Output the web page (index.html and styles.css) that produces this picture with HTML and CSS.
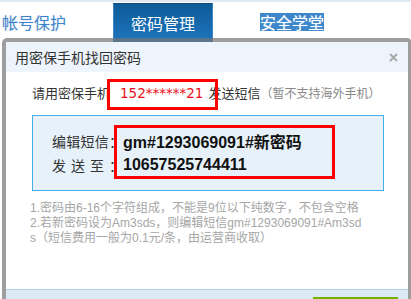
FILE: index.html
```html
<!DOCTYPE html>
<html lang="zh-CN">
<head>
<meta charset="utf-8">
<title>用密保手机找回密码</title>
<link rel="stylesheet" href="styles.css">
</head>
<body>
<div class="strip"></div>
<nav class="tabs">
  <div class="tab t1">帐号保护</div>
  <div class="tab t2">密码管理</div>
  <div class="tab t3"><span>安全学堂</span></div>
</nav>
<section class="dialog">
  <header class="dlg-title">
    <span>用密保手机找回密码</span>
    <svg class="close" width="9" height="9" viewBox="0 0 9 9"><path d="M1 1L8 8M8 1L1 8" stroke="#a8a8a8" stroke-width="1.8" fill="none"/></svg>
  </header>
  <div class="dlg-body">
    <p class="send-line">请用密保手机<span class="phone">152******21</span>发送短信<span class="hint">（暂不支持海外手机）</span></p>
    <i class="mark mark-phone"></i>
    <div class="sms-box">
      <div class="row"><span class="lbl">编辑短信：</span><b class="val">gm#1293069091#新密码</b></div>
      <div class="row"><span class="lbl">发送至：</span><b class="val">10657525744411</b></div>
      <i class="mark mark-sms"></i>
    </div>
    <div class="notes">1.密码由6-16个字符组成，不能是9位以下纯数字，不包含空格<br>2.若新密码设为Am3sds，则编辑短信gm#1293069091#Am3sd<br>s（短信费用一般为0.1元/条，由运营商收取）</div>
  </div>
  <footer class="dlg-foot"><span class="btn"></span></footer>
</section>
</body>
</html>
```
FILE: styles.css
```css
html, body {
  margin: 0;
  padding: 0;
}
body {
  width: 411px;
  height: 299px;
  overflow: hidden;
  background: #fff;
  font-family: "Liberation Sans", "Noto Sans CJK SC", sans-serif;
  color: #333;
}
.strip {
  height: 2px;
  background: #e0eaf5;
}
.tabs {
  display: flex;
  height: 40px;
  margin-top: 1px;
  font-size: 16px;
  font-family: "Noto Sans CJK SC", sans-serif;
}
.tab {
  display: flex;
  align-items: center;
  box-sizing: border-box;
  line-height: 1;
}
.t1 {
  width: 113px;
  padding-left: 2px;
  padding-bottom: 2px;
  color: #3d82c8;
  text-shadow: 0 0 1px #fff, 0 0 2px #cfe2f5;
}
.t2 {
  width: 100px;
  justify-content: center;
  color: #fff;
  background: linear-gradient(#0d5b97, #1f76c0);
  border-top: 1px solid #0a4b80;
  border-left: 1px solid #3a85c5;
  border-right: 1px solid #3a85c5;
  padding-bottom: 2px;
}
.t3 {
  padding-left: 47px;
  padding-bottom: 2px;
}
.t3 span {
  color: #fff;
  background: #3c87c9;
  padding: 1px 0;
  text-shadow: 0 0 1px #9cc6ec;
}
.dialog {
  position: relative;
  z-index: 1;
  margin: -5px 0 0 2px;
  width: 410px;
  box-sizing: border-box;
  border: 4px solid rgba(118, 118, 118, 0.7);
  border-bottom: none;
  border-radius: 5px 5px 0 0;
  background: #fff;
  background-clip: padding-box;
}
.dlg-title {
  height: 30px;
  display: flex;
  align-items: center;
  justify-content: space-between;
  padding: 0 10px 0 9px;
  background: #eef4fb;
  font-size: 14px;
  font-family: "Noto Sans CJK SC", sans-serif;
  color: #333;
}
.close {
  display: block;
}
.dlg-body {
  position: relative;
  height: 217px;
  box-sizing: border-box;
  padding-top: 11px;
}
.send-line {
  margin: 0 0 11px;
  padding-left: 26px;
  font-size: 13px;
  line-height: 20px;
  color: #333;
  white-space: nowrap;
}
.phone {
  font-family: "DejaVu Sans", sans-serif;
  font-size: 13.5px;
  color: #e8101a;
  margin: 0 5px 0 10px;
}
.hint {
  color: #888;
  font-size: 12px;
}
.mark {
  position: absolute;
  box-sizing: border-box;
  border: 3px solid #f00;
}
.mark-phone {
  left: 101px;
  top: 7px;
  width: 111px;
  height: 31px;
}
.sms-box {
  position: relative;
  margin-left: 26px;
  width: 352px;
  height: 76px;
  box-sizing: border-box;
  border: 1px solid #45b0e8;
  background: #e6f1f9;
  padding: 13px 0 0 19px;
}
.row {
  display: flex;
  align-items: center;
  height: 24px;
  white-space: nowrap;
}
.lbl {
  display: inline-block;
  width: 71px;
  font-size: 14px;
  font-family: "Noto Sans CJK SC", sans-serif;
  text-align: justify;
  text-align-last: justify;
  color: #333;
}
.val {
  font-size: 16px;
  font-weight: bold;
  color: #111;
}
.mark-sms {
  left: 81px;
  top: 9px;
  width: 221px;
  height: 54px;
}
.notes {
  margin-top: 10px;
  padding-left: 24px;
  font-size: 12px;
  line-height: 15px;
  color: #a6a6a6;
  white-space: nowrap;
}
.dlg-foot {
  height: 10px;
  overflow: hidden;
  box-sizing: border-box;
  border-top: 1px solid #b7d0e2;
  background: #dceaf6;
  padding: 7px 0 0 307px;
}
.btn {
  display: block;
  width: 85px;
  height: 26px;
  box-sizing: border-box;
  border-top: 2px solid #78b000;
  background: #8fc31f;
}
```
